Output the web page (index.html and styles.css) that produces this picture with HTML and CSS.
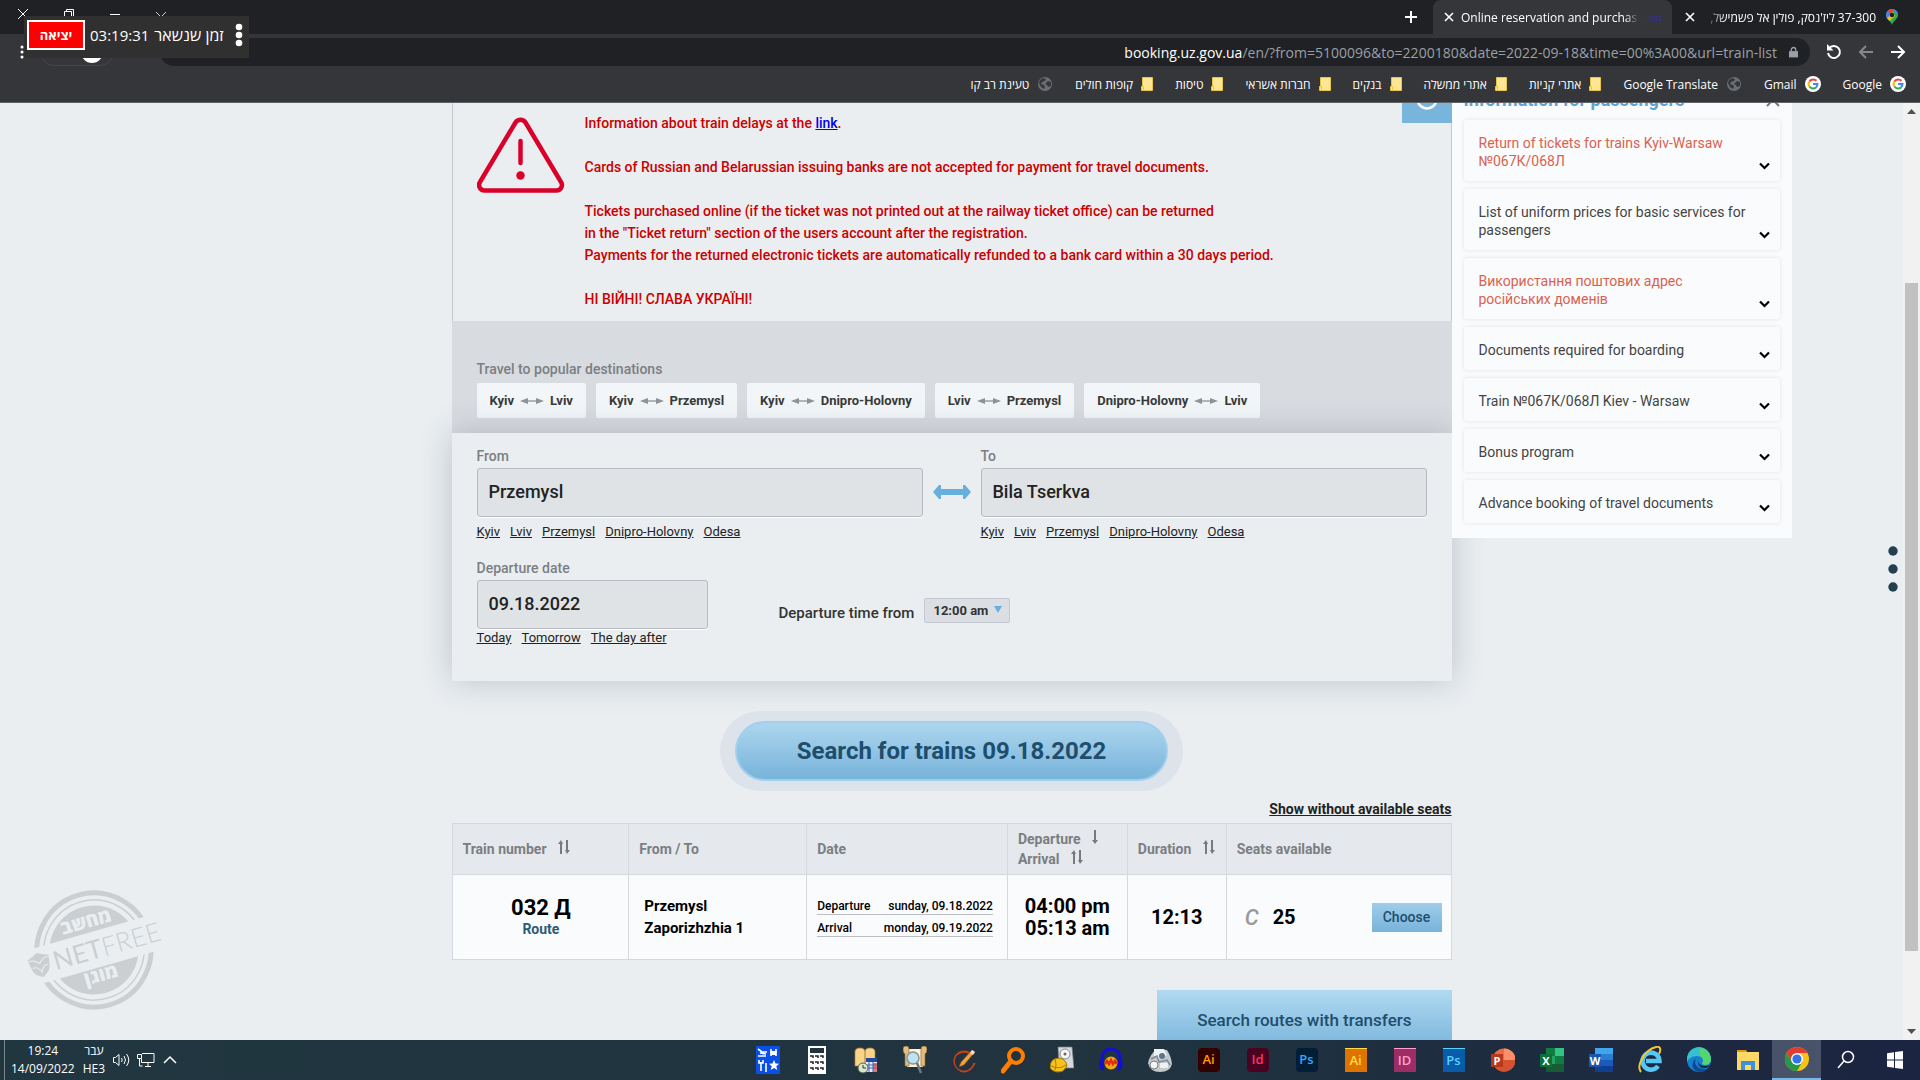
FILE: index.html
```
<!DOCTYPE html>
<html lang="en">
<head>
  <meta charset="UTF-8">
  <title>Online reservation and purchase</title>
  <link rel="stylesheet" href="styles.css">
</head>
<body>

<svg class="defs" aria-hidden="true">
  <symbol id="i-close" viewBox="0 0 10 10"><path d="M1 1l8 8M9 1l-8 8" stroke="currentColor" stroke-width="1.6" fill="none"/></symbol>
  <symbol id="i-folder" viewBox="0 0 12 14"><path d="M1.5 .5h10v13h-11v-4h1z" fill="#ffe694" stroke="#e8c443"/><path d="M.5 9.500h2v4" fill="#ffe694" stroke="#e8c443"/></symbol>
  <symbol id="i-globe" viewBox="0 0 16 16"><circle cx="8" cy="8" r="7" fill="#6b6f74"/><path d="M3 4l3-2 3 1-1 2-3 1-1 2 3 1 1 2-1 2-3-2-2-4zM11 5l3 1v4l-3 1-1-2-2-1z" fill="#35363a"/></symbol>
  <symbol id="i-google" viewBox="0 0 16 16"><circle cx="8" cy="8" r="8" fill="#fff"/><g fill="none" stroke-width="2"><path d="M4.400 5.500a4.500 4.500 0 0 1 7-.8" stroke="#ea4335"/><path d="M4.400 10.500a4.700 4.700 0 0 1 0-5" stroke="#fbbc05"/><path d="M11 11.400a4.500 4.500 0 0 1-6.600-.9" stroke="#34a853"/><path d="M8 8h4.500a4.600 4.600 0 0 1-1.500 3.400" stroke="#4285f4"/></g></symbol>
  <symbol id="i-arrows" viewBox="0 0 24 8"><path d="M0 4l8-3v6zM24 4l-8-3v6z" fill="#8f9496"/><path d="M6 4h12" stroke="#8f9496" stroke-width="1.300"/></symbol>
  <symbol id="i-chevron" viewBox="0 0 11 8"><path d="M1 1.500l4.500 4.500 4.500-4.500" fill="none" stroke="#000" stroke-width="2.200"/></symbol>
  <symbol id="i-sort" viewBox="0 0 12 14"><path d="M3 14V2M9 0v12" stroke="#777b80" stroke-width="2"/><path d="M0 4l3-4 2 4zM7 10l2 4 3-4z" fill="#777b80"/></symbol>
  <symbol id="i-down" viewBox="0 0 6 14"><path d="M3 0v12" stroke="#777b80" stroke-width="2"/><path d="M0 10l3 4 3-4z" fill="#777b80"/></symbol>
</svg>

<header class="browser" dir="rtl">
  <div class="tabs">
    <div class="tab">
      <svg class="pin" viewBox="0 0 12 16"><path d="M6 16C5 12 0 10 0 6a6 6 0 0 1 12 0c0 4-5 6-6 10z" fill="#34a853"/><path d="M0 6a6 6 0 0 1 6-6v6L1.500 10C.6 9 0 7.600 0 6z" fill="#4285f4"/><path d="M1.500 2.200A6 6 0 0 1 8 .3L5 5z" fill="#ea4335"/><path d="M1 9.500L7 3l2 4-5.500 5z" fill="#fbbc04"/><path d="M8 .3A6 6 0 0 1 12 6L9 4z" fill="#4285f4"/><circle cx="6" cy="6" r="2.200" fill="#202124"/></svg>
      <span class="tab-title">37-300 ליז'נסק, פולין אל פשמישל,</span>
      <button class="tab-close" aria-label="Close"><svg><use href="#i-close"/></svg></button>
    </div>
    <div class="tab active">
      <span class="favicon">בוצר</span>
      <span class="tab-title" dir="ltr">Online reservation and purchase</span>
      <button class="tab-close" aria-label="Close"><svg><use href="#i-close"/></svg></button>
    </div>
    <button class="new-tab" aria-label="New tab"><svg viewBox="0 0 12 12"><path d="M6 0v12M0 6h12" stroke="#fff" stroke-width="2"/></svg></button>
    <div class="window-controls">
      <button aria-label="Search tabs"><svg viewBox="0 0 10 10"><path d="M0 3l5 5 5-5" fill="none" stroke="#ccc"/></svg></button>
      <button aria-label="Minimize"><svg viewBox="0 0 10 10"><path d="M0 5.500h10" stroke="#fff"/></svg></button>
      <button aria-label="Restore"><svg viewBox="0 0 10 10"><path d="M.5 2.500h7v7h-7zM2.500 2.500v-2h7v7h-2" fill="none" stroke="#fff"/></svg></button>
      <button aria-label="Close window"><svg viewBox="0 0 10 10"><path d="M0 0l10 10M10 0L0 10" stroke="#fff"/></svg></button>
    </div>
  </div>
  <div class="toolbar">
    <button aria-label="Forward"><svg viewBox="0 0 16 16"><path d="M1 8h13M8 2l6 6-6 6" fill="none" stroke="#fff" stroke-width="2"/></svg></button>
    <button aria-label="Back"><svg viewBox="0 0 16 16"><path d="M15 8H2M8 2L2 8l6 6" fill="none" stroke="#85878a" stroke-width="2"/></svg></button>
    <button aria-label="Reload"><svg viewBox="0 0 16 16"><path d="M3 4.500A6 6 0 1 1 2 9" fill="none" stroke="#fff" stroke-width="2"/><path d="M1 0v6.500h6.500z" fill="#fff"/></svg></button>
    <div class="omnibox">
      <svg class="lock" viewBox="0 0 10 12"><path d="M0 5h10v7H0z" fill="#9aa0a6"/><path d="M2.500 5V3.500a2.500 2.500 0 0 1 5 0V5" fill="none" stroke="#9aa0a6" stroke-width="1.500"/></svg>
      <div class="url" dir="ltr" role="textbox" aria-label="Address" contenteditable="true" spellcheck="false"><b>booking.uz.gov.ua</b>/en/?from=5100096&amp;to=2200180&amp;date=2022-09-18&amp;time=00%3A00&amp;url=train-list</div>
    </div>
    <button class="media" aria-label="Media"><svg viewBox="0 0 14 12"><path d="M0 11h14" stroke="#fff" stroke-width="2"/></svg></button>
    <button class="profile" aria-label="Profile"><span></span></button>
    <button class="menu" aria-label="Menu"><svg viewBox="0 0 4 14"><g fill="#fff"><circle cx="2" cy="2" r="1.500"/><circle cx="2" cy="7" r="1.500"/><circle cx="2" cy="12" r="1.500"/></g></svg></button>
  </div>
  <nav class="bookmarks">
    <a href="#"><svg class="round"><use href="#i-google"/></svg>Google</a>
    <a href="#"><svg class="round"><use href="#i-google"/></svg>Gmail</a>
    <a href="#"><svg class="round"><use href="#i-globe"/></svg>Google Translate</a>
    <a href="#"><svg><use href="#i-folder"/></svg>אתרי קניות</a>
    <a href="#"><svg><use href="#i-folder"/></svg>אתרי ממשלה</a>
    <a href="#"><svg><use href="#i-folder"/></svg>בנקים</a>
    <a href="#"><svg><use href="#i-folder"/></svg>חברות אשראי</a>
    <a href="#"><svg><use href="#i-folder"/></svg>טיסות</a>
    <a href="#"><svg><use href="#i-folder"/></svg>קופות חולים</a>
    <a href="#"><svg class="round"><use href="#i-globe"/></svg>טעינת רב קו</a>
  </nav>
</header>

<div class="timer">
  <button class="exit">יציאה</button>
  <span class="clock">03:19:31</span>
  <span class="left">זמן שנשאר</span>
  <svg class="dots" viewBox="0 0 8 24"><g fill="#fff"><circle cx="4" cy="4" r="3.300"/><circle cx="4" cy="12" r="3.300"/><circle cx="4" cy="20" r="3.300"/></g></svg>
</div>

<div class="viewport">
  <div class="page">
    <main>
      <section class="alert">
        <svg class="warning" viewBox="0 0 88 76"><path d="M38.500 5.500a6 6 0 0 1 10 0L84 65a5.500 5.500 0 0 1-4.500 8.500h-72A5.500 5.500 0 0 1 3 65z" fill="none" stroke="#d9002a" stroke-width="4.500"/><path d="M43.500 24v22" stroke="#d9002a" stroke-width="4.500" stroke-linecap="round"/><circle cx="43.500" cy="58.500" r="4.200" fill="#d9002a"/></svg>
        <div class="alert-text">
          <p>Information about train delays at the <a href="#">link</a>.</p>
          <p>Cards of Russian and Belarussian issuing banks are not accepted for payment for travel documents.</p>
          <p>Tickets purchased online (if the ticket was not printed out at the railway ticket office) can be returned<br>
          in the "Ticket return" section of the users account after the registration.<br>
          Payments for the returned electronic tickets are automatically refunded to a bank card within a 30 days period.</p>
          <p>НІ ВІЙНІ! СЛАВА УКРАЇНІ!</p>
        </div>
      </section>

      <section class="popular">
        <h2>Travel to popular destinations</h2>
        <div class="routes">
          <button>Kyiv <svg><use href="#i-arrows"/></svg> Lviv</button>
          <button>Kyiv <svg><use href="#i-arrows"/></svg> Przemysl</button>
          <button>Kyiv <svg><use href="#i-arrows"/></svg> Dnipro-Holovny</button>
          <button>Lviv <svg><use href="#i-arrows"/></svg> Przemysl</button>
          <button>Dnipro-Holovny <svg><use href="#i-arrows"/></svg> Lviv</button>
        </div>
      </section>

      <form class="search">
        <div class="stations">
          <div class="field">
            <label for="from">From</label>
            <input id="from" type="text" value="Przemysl">
            <div class="hints"><a href="#">Kyiv</a><a href="#">Lviv</a><a href="#">Przemysl</a><a href="#">Dnipro-Holovny</a><a href="#">Odesa</a></div>
          </div>
          <button type="button" class="swap" aria-label="Swap stations"><svg viewBox="0 0 38 14"><path d="M0 7l6-7h2v4h22V0h2l6 7-6 7h-2v-4H8v4H6z" fill="#67b0de"/></svg></button>
          <div class="field">
            <label for="to">To</label>
            <input id="to" type="text" value="Bila Tserkva">
            <div class="hints"><a href="#">Kyiv</a><a href="#">Lviv</a><a href="#">Przemysl</a><a href="#">Dnipro-Holovny</a><a href="#">Odesa</a></div>
          </div>
        </div>
        <div class="when">
          <div class="field date">
            <label for="date">Departure date</label>
            <input id="date" type="text" value="09.18.2022">
            <div class="hints"><a href="#">Today</a><a href="#">Tomorrow</a><a href="#">The day after</a></div>
          </div>
          <div class="time">
            <label for="time">Departure time from</label>
            <span class="select"><select id="time"><option>12:00 am</option></select></span>
          </div>
        </div>
      </form>

      <div class="submit"><button>Search for trains 09.18.2022</button></div>

      <a class="toggle" href="#">Show without available seats</a>

      <table class="trains">
        <thead>
          <tr>
            <th class="c-num">Train number <svg class="sort"><use href="#i-sort"/></svg></th>
            <th class="c-route">From / To</th>
            <th class="c-date">Date</th>
            <th class="c-time">Departure <svg class="sort down"><use href="#i-down"/></svg><br>Arrival <svg class="sort"><use href="#i-sort"/></svg></th>
            <th class="c-dur">Duration <svg class="sort"><use href="#i-sort"/></svg></th>
            <th>Seats available</th>
          </tr>
        </thead>
        <tbody>
          <tr>
            <td class="num">032 Д<a href="#">Route</a></td>
            <td class="route">Przemysl<br>Zaporizhzhia 1</td>
            <td class="dates">
              <div><span>Departure</span><span>sunday, 09.18.2022</span></div>
              <div><span>Arrival</span><span>monday, 09.19.2022</span></div>
            </td>
            <td class="big">04:00 pm<br>05:13 am</td>
            <td class="big">12:13</td>
            <td><div class="seats"><i>С</i><b>25</b><button>Choose</button></div></td>
          </tr>
        </tbody>
      </table>

      <button class="transfers">Search routes with transfers</button>
    </main>

    <aside class="info">
      <button class="info-tab" aria-label="Information"><svg viewBox="0 0 22 22"><circle cx="11" cy="11" r="9.500" fill="none" stroke="#fff" stroke-width="2.500"/></svg></button>
      <div class="info-head">
        <h2>Information for passengers</h2>
        <svg viewBox="0 0 14 14"><path d="M1 1l12 12M13 1L1 13" stroke="#777" stroke-width="2"/></svg>
      </div>
      <ul>
        <li class="hot"><a href="#">Return of tickets for trains Kyiv-Warsaw №067К/068Л</a><svg><use href="#i-chevron"/></svg></li>
        <li><a href="#">List of uniform prices for basic services for passengers</a><svg><use href="#i-chevron"/></svg></li>
        <li class="hot"><a href="#">Використання поштових адрес російських доменів</a><svg><use href="#i-chevron"/></svg></li>
        <li><a href="#">Documents required for boarding</a><svg><use href="#i-chevron"/></svg></li>
        <li><a href="#">Train №067К/068Л Kiev - Warsaw</a><svg><use href="#i-chevron"/></svg></li>
        <li><a href="#">Bonus program</a><svg><use href="#i-chevron"/></svg></li>
        <li><a href="#">Advance booking of travel documents</a><svg><use href="#i-chevron"/></svg></li>
      </ul>
    </aside>
  </div>

  <div class="scrollbar">
    <svg viewBox="0 0 9 5"><path d="M0 5l4.500-5L9 5z" fill="#505050"/></svg>
    <div class="track"><div class="thumb"></div></div>
    <svg viewBox="0 0 9 5"><path d="M0 0l4.500 5L9 0z" fill="#505050"/></svg>
  </div>

  <svg class="side-dots" viewBox="0 0 10 46"><g fill="#22404f"><circle cx="5" cy="5" r="4.700"/><circle cx="5" cy="23" r="4.700"/><circle cx="5" cy="41" r="4.700"/></g></svg>

  <svg class="stamp" viewBox="0 0 140 120">
    <g transform="rotate(-16 70 60)">
      <circle cx="70" cy="60" r="57" fill="none" stroke="#cbcfd2" stroke-width="5"/>
      <circle cx="70" cy="60" r="50" fill="none" stroke="#cbcfd2" stroke-width="1.500"/>
      <circle cx="70" cy="60" r="44.500" fill="#cbcfd2"/>
      <path d="M5 42h130v36H5z" fill="#eaeef1"/>
      <path d="M3 52l5-2 6-3 6 3 5 2-2 11c-1 4-5 7-9 9-5-2-8-5-9-9z" fill="#cbcfd2"/>
      <path d="M2 54c5-2 8 0 12 4 4-4 7-6 12-4M6 61c4-1 6 1 8 6 2-5 4-7 8-6" fill="none" stroke="#eaeef1"/>
      <text x="28" y="69" class="stamp-name">NET<tspan class="thin">FREE</tspan></text>
      <text x="70" y="37" class="stamp-he">מחשב</text>
      <text x="70" y="92" class="stamp-he">מוגן</text>
    </g>
  </svg>
</div>

<footer class="taskbar">
  <div class="tray">
    <div class="stack clock-date"><span>19:24</span><span>14/09/2022</span></div>
    <div class="stack"><span>עבר</span><span>HE3</span></div>
    <svg viewBox="0 0 18 14"><path d="M.5 4.500h2l3.500-3v11l-3.500-3h-2zM8.500 5q1.500 2 0 4M11 3q3 4 0 8M13.500 1q4.500 6 0 12" fill="none" stroke="#fff"/></svg>
    <svg viewBox="0 0 18 14"><path d="M5 .5h12v9H4.500V6M8 13.500h6M11 10v3M.5 1.500h4v4h-4zM2.500 6v7h3" fill="none" stroke="#fff"/></svg>
    <svg viewBox="0 0 18 14"><path d="M3 10l6-6 6 6" fill="none" stroke="#fff" stroke-width="1.500"/></svg>
  </div>
  <div class="apps">
    <button aria-label="Tools"><svg viewBox="0 0 24 28"><path d="M0 0h24v28H0z" fill="#0a50e8"/><g fill="none" stroke="#fff" stroke-width="1.600"><path d="M2 3l4 3h5M2 10h8M4 7l6 1M15 3v7M20 3v7M14 6h7M5 16v9M10 17v9M3 14v3h4v-3"/></g><path d="M15 5h5v4h-5zM18 14l1.500 3.500 3.500.3-2.700 2.400 1 3.800-3.300-2-3.300 2 1-3.800-2.700-2.400 3.500-.3z" fill="#fff"/></svg></button>
    <button aria-label="Calculator"><svg viewBox="0 0 24 28"><path d="M3 0h18v28H3z" fill="#fff"/><path d="M5 2h14v5H5z" fill="#20343f"/><path d="M5 10h3v2M10 10h3v2M15 10h3v2M5 16h3v2M10 16h3v2M15 16h3v2M5 22h3v2M10 22h3v2M15 22h3v2" fill="none" stroke="#222" stroke-width="1.500"/></svg></button>
    <button aria-label="Hebrew calendar"><svg viewBox="0 0 24 28"><path d="M1 20V6q0-4 5-4t5 4v14zM11 20V6q0-4 5-4t5 4v14z" fill="#f8d48b" stroke="#b98136" stroke-width=".7"/><path d="M12 12h11v14H12z" fill="#e9edf4"/><path d="M12 12h11v4H12z" fill="#23489c"/><path d="M12 19h11M12 22h11M15 16v10M19 16v10" stroke="#3c62c4"/><path d="M19 17h4v9h-4z" fill="#d03030" opacity=".6"/><circle cx="9" cy="22" r="5" fill="#dce7cf" stroke="#55624a"/><path d="M9 19v3h3" stroke="#333" fill="none"/></svg></button>
    <button aria-label="Scroll search"><svg viewBox="0 0 24 28"><path d="M4 3h16v18H4z" fill="#fff4d6"/><path d="M0 3q0-3 3-3t3 3v17H2V8q-2-1-2-5zM24 3q0-3-3-3t-3 3v17h4V8q2-1 2-5z" fill="#e5bd7c" stroke="#8b6a35" stroke-width=".7"/><circle cx="10" cy="12" r="6" fill="#bfe2f3" stroke="#85939b" stroke-width="1.500"/><path d="M14 17l4 10" stroke="#6a7b80" stroke-width="2.500"/></svg></button>
    <button aria-label="Draw"><svg viewBox="0 0 24 28"><path d="M20 9a10 10 0 1 0 2 8M8 25q10 3 15-8M3 10q7-6 14-3" fill="none" stroke="#c2401c" stroke-width="1.500"/><path d="M7 21l2-5L20 4l3 2-11 13z" fill="#f2a23d" stroke="#7b461b" stroke-width=".7"/><path d="M20 4l3 2-2 3-3-2z" fill="#f3d9d0"/></svg></button>
    <button aria-label="Everything"><svg viewBox="0 0 24 28"><circle cx="15" cy="10" r="7" fill="none" stroke="#ff7d00" stroke-width="4"/><path d="M10 15l-8 10" stroke="#ff7d00" stroke-width="5" stroke-linecap="round"/></svg></button>
    <button aria-label="Disk recovery"><svg viewBox="0 0 24 28"><path d="M8 1h14l2 21H9z" fill="#d5d9dc" stroke="#777" stroke-width=".7"/><circle cx="15" cy="8" r="5" fill="#f7f7f7" stroke="#888"/><circle cx="15" cy="8" r="1.500" fill="#666"/><path d="M0 22q0-10 9-10 7 1 8 8l-4 5q-8 3-13-3z" fill="#f6c21b" stroke="#9d7507"/><path d="M5 13q2 6 0 11M1 20q8 4 15-1" fill="none" stroke="#ac7d09"/></svg></button>
    <button aria-label="Audacity"><svg viewBox="0 0 24 28"><path d="M3 16V12a9 9 0 0 1 18 0v4" fill="none" stroke="#1010d9" stroke-width="3"/><path d="M0 15l5-2v12l-4-2zM24 15l-5-2v12l4-2z" fill="#1012c8"/><circle cx="12" cy="17" r="6.500" fill="#f0a818"/><path d="M6 18l2-3 2 3 2-4 2 4 2-3 2 3" fill="none" stroke="#e03010" stroke-width="2.500"/></svg></button>
    <button aria-label="Imaging"><svg viewBox="0 0 24 28"><path d="M0 17q2-9 9-14l10 1q4 6 5 14-2 8-12 8T0 17z" fill="#c4c9cc"/><path d="M6 3h10l3 6-7 4-6-3z" fill="#eef1f2"/><circle cx="14" cy="10" r="3" fill="#5a7490"/><path d="M3 13l6-3 2 6 8-2 3 5" fill="none" stroke="#7f898f" stroke-width="1.500"/><circle cx="6" cy="19" r="4" fill="#f3f5f5" stroke="#798085"/><path d="M12 17h8v5h-8z" fill="#eff1f1"/></svg></button>
    <button><span class="adobe" style="--bg:#300;--fg:#ff9a00">Ai</span></button>
    <button><span class="adobe" style="--bg:#49021f;--fg:#ff3366">Id</span></button>
    <button><span class="adobe" style="--bg:#001e36;--fg:#31a8ff">Ps</span></button>
    <button><span class="adobe old" style="--bg:#df7300;--fg:#ffdc45">Ai</span></button>
    <button><span class="adobe old" style="--bg:#9e2d66;--fg:#ff9fd0">ID</span></button>
    <button><span class="adobe old" style="--bg:#085caa;--fg:#58d2ff">Ps</span></button>
    <button aria-label="PowerPoint"><svg viewBox="0 0 24 28"><circle cx="13" cy="14" r="11.500" fill="#ed6c47"/><path d="M13 2.500A11.500 11.500 0 0 1 24.500 14H13z" fill="#ff8f6b"/><path d="M13 14h11.500A11.500 11.500 0 0 1 4 21z" fill="#d35230"/><path d="M0 8h12v13H0z" fill="#b7391d"/><text x="6" y="18.500" class="ms">P</text></svg></button>
    <button aria-label="Excel"><svg viewBox="0 0 24 28"><path d="M6 2h18v24H6z" fill="#21a366"/><path d="M6 2h9v8H6zM15 10h9v8h-9z" fill="#107c41"/><path d="M15 2h9v8h-9z" fill="#33c481"/><path d="M6 18h18v8H6z" fill="#185c37"/><path d="M0 8h12v13H0z" fill="#0c7039"/><text x="6" y="18.500" class="ms">X</text></svg></button>
    <button aria-label="Word"><svg viewBox="0 0 24 28"><path d="M6 2h18v6H6z" fill="#41a5ee"/><path d="M6 8h18v6H6z" fill="#2b7cd3"/><path d="M6 14h18v6H6z" fill="#185abd"/><path d="M6 20h18v6H6z" fill="#103f91"/><path d="M0 8h12v13H0z" fill="#1b56ad"/><text x="6" y="18.500" class="ms">W</text></svg></button>
    <button aria-label="Internet Explorer"><svg viewBox="0 0 24 28"><path d="M20 20a8.500 8.500 0 1 1 1.500-5H8" fill="none" stroke="#55c8f7" stroke-width="4.500"/><path d="M3 26C-2 20 6 4 18 1c5-1 5 3 3 7" fill="none" stroke="#f5c52c" stroke-width="2"/></svg></button>
    <button aria-label="Edge"><svg viewBox="0 0 24 28"><circle cx="12" cy="14" r="12" fill="#1680cf"/><path d="M0 13A12 12 0 0 1 24 13c0 5-5 7-9 5 3-5-1-8-5-8-5 0-9 3-10 6z" fill="#35c1d0"/><path d="M13 2a12 12 0 0 1 11 11c0 5-5 7-9 5 3-4 0-7-2-8z" fill="#55d66c"/><path d="M9 12c-3 6 2 12 10 11l2-1a12 12 0 0 1-8 4C5 26 3 17 9 12z" fill="#0c4c94"/><path d="M11 15q1 5 8 5l4-1q-2 3-4 3-8 1-8-7z" fill="#1b2742"/></svg></button>
    <button aria-label="Explorer"><svg viewBox="0 0 24 28"><path d="M1 4h9l2 3H1z" fill="#e09b14"/><path d="M1 6h22v18H1z" fill="#ffd767"/><path d="M5 24v-9h14v9h-4v-5H9v5z" fill="#3c91d9"/></svg></button>
    <button class="running" aria-label="Chrome"><svg viewBox="0 0 24 28"><circle cx="12" cy="14" r="12" fill="#fbc116"/><path d="M1.600 8A12 12 0 0 1 22.400 8H12L7 17z" fill="#e33b2e"/><path d="M1.600 8A12 12 0 0 0 12 26l5.200-9H7z" fill="#279847"/><circle cx="12" cy="14" r="6" fill="#fff"/><circle cx="12" cy="14" r="4.600" fill="#2f75e8"/></svg></button>
    <button aria-label="Search"><svg viewBox="0 0 24 28"><circle cx="14" cy="11" r="5.500" fill="none" stroke="#fff" stroke-width="1.500"/><path d="M10 15l-6 7" stroke="#fff" stroke-width="1.500"/></svg></button>
    <button aria-label="Start"><svg viewBox="0 0 24 28"><path d="M4 7.200l7-1V13.500H4zM12 6l8-1v8.500h-8zM4 14.500h7v7.300l-7-1zM12 14.500h8V23l-8-1z" fill="#fff"/></svg></button>
  </div>
</footer>

</body>
</html>
```
FILE: styles.css
```
* {
  box-sizing: border-box;
}
body {
  margin: 0;
  height: 100vh;
  display: flex;
  flex-direction: column;
  overflow: hidden;
  font-family: Roboto, "Liberation Sans", sans-serif;
  font-size: 14px;
  color: #222;
  background: #eaeef1;
}
button {
  font: inherit;
  color: inherit;
  border: none;
  background: none;
  padding: 0;
  cursor: pointer;
}
h2, p, ul {
  margin: 0;
  padding: 0;
}
.defs {
  display: none;
}

/* browser window */
.browser {
  background: #35363a;
  border-bottom: 1px solid #5f6368;
  color: #fff;
  font-family: "Open Sans", "Noto Sans", sans-serif;
  font-size: 12px;
}
.tabs {
  display: flex;
  align-items: center;
  height: 34px;
  background: #202124;
}
.tab {
  display: flex;
  align-items: center;
  gap: 10px;
  width: 248px;
  height: 34px;
  padding: 0 22px 0 13px;
}
.tab.active {
  gap: 7px;
  width: 239px;
  padding: 0 10px 0 11px;
  background: #35363a;
  border-radius: 8px 8px 0 0;
}
.tab .pin {
  width: 12px;
  height: 16px;
}
.tab-title {
  flex: 1;
  overflow: hidden;
  white-space: nowrap;
  mask-image: linear-gradient(to right, transparent, #000 20px);
}
.tab.active .tab-title {
  mask-image: linear-gradient(to left, transparent, #000 14px);
}
.tab-close, .tab-close svg {
  width: 10px;
  height: 10px;
  display: block;
}
.favicon {
  width: 16px;
  font-size: 8px;
  color: #33339a;
}
.new-tab {
  margin: 0 16px;
}
.new-tab svg {
  display: block;
  width: 12px;
  height: 12px;
}
.window-controls {
  display: flex;
  align-self: flex-start;
  margin-right: auto;
}
.window-controls button {
  width: 46px;
  height: 28px;
}
.window-controls svg {
  width: 10px;
  height: 10px;
}
.toolbar {
  display: flex;
  align-items: center;
  gap: 16px;
  height: 36px;
  padding: 0 14px 0 20px;
}
.toolbar svg {
  display: block;
  width: 16px;
  height: 16px;
}
.omnibox {
  flex: 1;
  display: flex;
  align-items: center;
  gap: 12px;
  height: 28px;
  padding: 0 12px;
  background: #202124;
  border-radius: 14px;
}
.omnibox .lock {
  width: 9px;
  height: 12px;
}
.url {
  font-size: 14px;
  color: #9aa0a6;
  white-space: nowrap;
}
.url b {
  font-weight: 400;
  color: #fff;
}
.toolbar .media svg {
  width: 14px;
  height: 12px;
}
.profile {
  width: 74px;
  height: 28px;
  padding: 2px 10px;
  border: 1px solid #45474b;
  border-radius: 14px;
}
.profile span {
  display: block;
  width: 22px;
  height: 22px;
  background: #fff;
  border-radius: 50%;
}
.toolbar .menu svg {
  width: 4px;
  height: 14px;
}
.bookmarks {
  display: flex;
  align-items: center;
  gap: 22px;
  height: 32px;
  padding: 0 14px 4px;
}
.bookmarks a {
  display: flex;
  align-items: center;
  gap: 8px;
  color: #fff;
  text-decoration: none;
  white-space: nowrap;
}
.bookmarks svg {
  width: 12px;
  height: 14px;
}
.bookmarks .round {
  width: 16px;
  height: 16px;
}

/* session timer, floats over the window */
.timer {
  position: absolute;
  top: 16px;
  left: 24px;
  display: flex;
  align-items: center;
  gap: 5px;
  height: 42px;
  padding: 0 6px 4px 3px;
  background: #303030;
  color: #fff;
  font-family: "Open Sans", "Noto Sans", sans-serif;
  font-size: 15px;
}
.exit {
  width: 58px;
  height: 30px;
  background: #f00;
  border: 2px solid #fff;
  font-size: 13px;
  font-weight: 700;
}
.timer .left {
  font-size: 16px;
}
.timer .dots {
  width: 8px;
  height: 24px;
  margin-left: 6px;
}

/* web page */
.viewport {
  position: relative;
  flex: 1;
  min-height: 0;
  display: flex;
  overflow: hidden;
}
.page {
  flex: 1;
  display: grid;
  grid-template-columns: minmax(0, 1fr) minmax(0, 1000px) minmax(0, 1fr);
  align-items: start;
}
main {
  grid-column: 2;
  display: flex;
  flex-direction: column;
}
.alert {
  display: flex;
  gap: 20px;
  padding: 9px 24px 11px;
  border: solid #c4c8cc;
  border-width: 0 1px;
}
.warning {
  width: 88px;
  height: 76px;
  margin-top: 5px;
}
.alert-text {
  display: grid;
  gap: 22px;
  color: #c00;
  font-weight: 500;
  line-height: 22px;
}
.alert-text a {
  color: #00e;
}
.popular {
  padding: 38px 25px 15px;
  background: #d8dbe0;
}
.popular h2, .field label {
  display: block;
  color: #7b7f82;
  font-size: 14px;
  font-weight: 500;
  line-height: 20px;
}
.routes {
  display: flex;
  gap: 10px;
  margin-top: 4px;
}
.routes button {
  display: flex;
  align-items: center;
  gap: 6px;
  height: 35px;
  padding: 0 13px;
  background: #f2f6f9;
  border-radius: 2px;
  color: #3a3a3a;
  font-size: 13px;
  font-weight: 700;
}
.routes svg {
  width: 24px;
  height: 8px;
}
.search {
  padding: 13px 25px 34px;
  background: #eaeef1;
  box-shadow: 0 0 30px rgba(60, 70, 90, 0.25);
}
.stations {
  display: flex;
  align-items: center;
  gap: 10px;
}
.field {
  flex: 1;
}
.field input {
  display: block;
  width: 100%;
  height: 49px;
  margin-top: 2px;
  padding: 0 11px 2px;
  background: #dfe3e6;
  border: 1px solid #b7bcc2;
  border-radius: 3px;
  box-shadow: 0 1px 0 #fff;
  color: #222;
  font: 500 18px Roboto, sans-serif;
}
.hints {
  display: flex;
  gap: 10px;
  margin-top: 6px;
  font-size: 13px;
  line-height: 18px;
}
.hints a {
  color: #222;
}
.swap svg {
  display: block;
  width: 38px;
  height: 14px;
  margin-bottom: 3px;
}
.when {
  display: flex;
  align-items: flex-end;
  gap: 71px;
  margin-top: 17px;
}
.date {
  flex: 0 0 231px;
}
.date .hints {
  margin-top: 0;
}
.time {
  display: flex;
  align-items: flex-end;
  gap: 10px;
  margin-bottom: 24px;
  color: #333;
  font-size: 15px;
  font-weight: 500;
  line-height: 20px;
}
.select {
  position: relative;
}
.select select {
  display: block;
  width: 86px;
  height: 25px;
  padding: 0 8px;
  appearance: none;
  background: #dbdfe3;
  border: 1px solid #c3c8d3;
  border-radius: 2px;
  color: #333;
  font: 700 13px Roboto, sans-serif;
}
.select::after {
  content: "";
  position: absolute;
  right: 8px;
  top: 8px;
  border: 4px solid transparent;
  border-top: 7px solid #67b0de;
  border-bottom: none;
}
.submit {
  align-self: center;
  margin-top: 30px;
  padding: 10px 15px;
  background: #dce3ea;
  border-radius: 40px;
}
.submit button {
  display: block;
  height: 60px;
  padding: 0 60px;
  background: linear-gradient(#acd6ee, #78b3da);
  border: 2px solid #a3cfee;
  border-radius: 30px;
  color: #1f4e6c;
  font-size: 24px;
  font-weight: 700;
}
.toggle {
  align-self: flex-end;
  margin: 8px 0 4px;
  color: #222;
  font-weight: 700;
  line-height: 20px;
}
.trains {
  width: 100%;
  table-layout: fixed;
  border-collapse: collapse;
  background: #fafbfd;
  color: #000;
}
.trains th, .trains td {
  border: 1px solid #d5d9dd;
  padding: 0 9px 0 10px;
}
.trains th {
  height: 51px;
  background: #e5e8ed;
  color: #7b7f82;
  font-weight: 700;
  line-height: 20px;
  text-align: left;
}
.trains td {
  height: 85px;
}
.c-num { width: 17.7%; }
.c-route { width: 17.8%; }
.c-date { width: 20.1%; }
.c-time { width: 12%; }
.c-dur { width: 9.9%; }
.sort {
  width: 12px;
  height: 14px;
  margin-left: 8px;
}
.trains .c-dur {
  padding-right: 0;
}
.sort.down {
  width: 6px;
}
.num {
  text-align: center;
  font-size: 22px;
  font-weight: 700;
  line-height: 24px;
}
.num a {
  display: block;
  color: #2c5b78;
  font-size: 14px;
  line-height: 18px;
  text-decoration: none;
}
.trains .route {
  padding-left: 15px;
  font-size: 15px;
  font-weight: 700;
  line-height: 22px;
}
.trains .dates {
  padding-right: 14px;
  font-size: 12px;
  font-weight: 500;
}
.dates div {
  display: flex;
  justify-content: space-between;
  height: 17px;
  border-bottom: 1px solid #bbbfc4;
  line-height: 17px;
  white-space: nowrap;
}
.dates div + div {
  margin-top: 5px;
}
.trains .big {
  padding: 0;
  text-align: center;
  font-size: 20px;
  font-weight: 700;
  line-height: 22px;
}
.seats {
  display: flex;
  align-items: center;
  padding-left: 8px;
  font-size: 20px;
}
.seats i {
  margin-right: 14px;
  color: #999;
  font-size: 22px;
  font-weight: 500;
}
.seats button {
  width: 70px;
  height: 29px;
  margin-left: auto;
  background: linear-gradient(#9fcde9, #78b3da);
  color: #1f4e6c;
  font-size: 14px;
  font-weight: 500;
}
.transfers {
  align-self: flex-end;
  height: 60px;
  margin-top: 30px;
  padding: 0 40px;
  background: linear-gradient(#b0daf1, #78b3da);
  color: #1f4e6c;
  font-size: 17px;
  font-weight: 500;
}

/* right panel */
.info {
  grid-column: 3;
  position: relative;
  width: 100%;
  max-width: 340px;
  margin-top: -24px;
  padding: 0 12px 15px;
  background: #fafbfd;
}
.info-tab {
  position: absolute;
  top: 0;
  right: 100%;
  width: 50px;
  height: 44px;
  padding-bottom: 2px;
  background: #77b5dc;
}
.info-tab svg {
  width: 22px;
  height: 22px;
}
.info-head {
  display: flex;
  align-items: center;
  justify-content: space-between;
  height: 41px;
}
.info-head h2 {
  color: #5aa5d8;
  font-size: 18px;
  font-weight: 700;
}
.info-head svg {
  width: 14px;
  height: 14px;
}
.info ul {
  display: grid;
  gap: 8px;
  list-style: none;
}
.info li {
  display: flex;
  align-items: flex-end;
  gap: 10px;
  padding: 14px 10px 11px 15px;
  border-radius: 3px;
  box-shadow: 0 0 4px rgba(0, 0, 0, 0.1);
  line-height: 18px;
}
.info li a {
  flex: 1;
  color: #444;
  text-decoration: none;
}
.info .hot a {
  color: #d9624f;
}
.info li svg {
  width: 11px;
  height: 8px;
}
.scrollbar {
  width: 17px;
  display: flex;
  flex-direction: column;
  align-items: center;
  background: #f1f1f1;
}
.scrollbar svg {
  width: 9px;
  height: 5px;
  margin: 6px;
}
.track {
  flex: 1;
  width: 13px;
}
.thumb {
  height: 74%;
  background: #c1c1c1;
}
.track::before {
  content: "";
  display: block;
  height: 18%;
}
.side-dots {
  position: absolute;
  right: 22px;
  top: 443px;
  width: 10px;
  height: 46px;
}
.stamp {
  position: absolute;
  left: 24px;
  bottom: 30px;
  width: 140px;
  height: 120px;
  overflow: visible;
}
.stamp-name {
  font: 400 26px Lato, sans-serif;
  fill: #cbcfd2;
}
.stamp-name .thin {
  font-weight: 300;
}
.stamp-he {
  font: 800 19px "Open Sans", sans-serif;
  fill: #eaeef1;
  text-anchor: middle;
}

/* taskbar */
.taskbar {
  display: flex;
  justify-content: space-between;
  height: 40px;
  background: linear-gradient(to right, #213740, #20333f 60%, #1b2440);
  color: #fff;
  font-family: "Open Sans", "Noto Sans", sans-serif;
  font-size: 12px;
}
.tray {
  display: flex;
  align-items: center;
  gap: 6px;
  margin-left: 4px;
  padding-left: 6px;
  border-left: 1px solid #7b878c;
}
.tray svg {
  width: 18px;
  height: 14px;
}
.stack {
  display: flex;
  flex-direction: column;
  align-items: center;
  line-height: 18px;
  margin-right: 2px;
}
.apps {
  display: flex;
  padding-right: 1px;
}
.apps button {
  display: flex;
  align-items: center;
  justify-content: center;
  width: 49px;
}
.apps svg {
  width: 24px;
  height: 28px;
}
.apps .running {
  background: #485369;
  border-bottom: 2px solid #76b9ed;
}
.adobe {
  width: 22px;
  height: 24px;
  border-radius: 4px;
  background: var(--bg);
  color: var(--fg);
  font-size: 13px;
  font-weight: 600;
  line-height: 23px;
}
.adobe.old {
  border-radius: 0;
  border-top: 1px solid var(--fg);
}
.ms {
  font: 700 11px "Open Sans", sans-serif;
  fill: #fff;
  text-anchor: middle;
}
```
